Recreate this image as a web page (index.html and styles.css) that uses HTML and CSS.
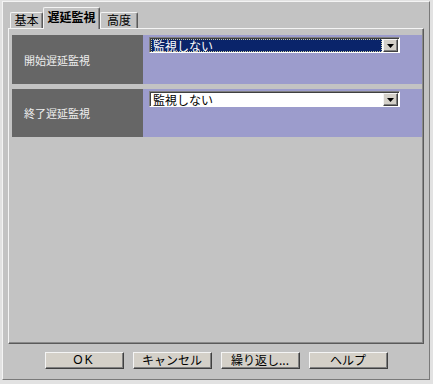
FILE: index.html
```html
<!DOCTYPE html>
<html lang="ja">
<head>
<meta charset="utf-8">
<link rel="stylesheet" href="styles.css">
</head>
<body>
<div class="dialog">
  <div class="tabs">
    <div class="tab tab-basic">基本</div>
    <div class="tab tab-active">遅延監視</div>
    <div class="tab tab-adv">高度</div>
  </div>
  <div class="panel">
    <div class="row">
      <div class="label">開始遅延監視</div>
      <div class="value">
        <div class="select focused">
          <span class="sel-text">監視しない</span>
          <span class="drop"><svg width="7" height="4" viewBox="0 0 7 4"><polygon points="0,0 7,0 3.5,4" fill="#000"/></svg></span>
        </div>
      </div>
    </div>
    <div class="row">
      <div class="label">終了遅延監視</div>
      <div class="value">
        <div class="select">
          <span class="sel-text">監視しない</span>
          <span class="drop"><svg width="7" height="4" viewBox="0 0 7 4"><polygon points="0,0 7,0 3.5,4" fill="#000"/></svg></span>
        </div>
      </div>
    </div>
  </div>
  <div class="buttons">
    <div class="btn btn-ok">OK</div>
    <div class="btn">キャンセル</div>
    <div class="btn">繰り返し...</div>
    <div class="btn">ヘルプ</div>
  </div>
</div>
</body>
</html>
```
FILE: styles.css
```css
body {
  margin: 0;
  background: #e2e2e2;
  font-family: "Noto Sans CJK JP", "Liberation Sans", sans-serif;
}
.dialog {
  box-sizing: border-box;
  width: 428px;
  height: 379px;
  margin: 1px 0 0 2px;
  background: #c3c3c3;
  border: 1px solid;
  border-color: #f4f4f4 #7a7a7a #7a7a7a #f4f4f4;
  padding: 5px 5px 0 5px;
}
.tabs {
  display: flex;
  align-items: flex-end;
  height: 21px;
  padding-left: 2px;
}
.tab {
  box-sizing: border-box;
  height: 16px;
  border-top: 1px solid #f4f4f4;
  border-left: 1px solid #f4f4f4;
  border-right: 1px solid #5a5a5a;
  border-radius: 2px 2px 0 0;
  box-shadow: inset -1px 0 #8a8a8a;
  font-size: 12px;
  line-height: 14px;
  text-align: center;
  color: #000;
  background: #c3c3c3;
}
.tab-basic { width: 33px; }
.tab-active {
  width: 57px;
  height: 22px;
  margin-bottom: -1px;
  font-weight: bold;
  line-height: 18px;
  position: relative;
  z-index: 1;
}
.tab-adv { width: 38px; }
.panel {
  box-sizing: border-box;
  height: 316px;
  border-top: 1px solid #f4f4f4;
  border-left: 1px solid #f4f4f4;
  border-right: 1px solid #5a5a5a;
  border-bottom: 1px solid #5a5a5a;
  box-shadow: inset -1px -1px #8a8a8a;
  padding: 6px 1px 0 3px;
  display: flex;
  flex-direction: column;
  gap: 5px;
}
.row {
  display: flex;
  height: 49px;
}
.row + .row { height: 48px; }
.label {
  width: 131px;
  background: #666666;
  color: #eeeeee;
  font-size: 11px;
  padding-left: 12px;
  box-sizing: border-box;
  display: flex;
  align-items: center;
}
.value {
  flex: 1;
  background: #9c9ccc;
  padding: 2px 0 0 6px;
}
.select {
  box-sizing: border-box;
  width: 251px;
  height: 16px;
  background: #fff;
  border: 1px solid;
  border-color: #808080 #fff #fff #808080;
  box-shadow: inset 1px 1px #404040;
  display: flex;
  align-items: center;
  padding: 1px 1px 0 1px;
}
.sel-text {
  flex: 1;
  height: 13px;
  font-size: 12px;
  line-height: 13px;
  color: #000;
  padding-left: 2px;
  white-space: nowrap;
}
.focused .sel-text {
  background: #0a246a;
  color: #fff;
  outline: 1px dotted #c8c8a0;
  outline-offset: -1px;
}
.drop {
  box-sizing: border-box;
  width: 15px;
  height: 13px;
  margin-left: 1px;
  background: #d4d0c8;
  border: 1px solid;
  border-color: #f4f4f4 #404040 #404040 #f4f4f4;
  box-shadow: inset -1px -1px #808080;
  display: flex;
  align-items: center;
  justify-content: center;
}
.drop svg { display: block; }
.buttons {
  display: flex;
  justify-content: center;
  gap: 9px;
  margin-top: 8px;
}
.btn {
  box-sizing: border-box;
  width: 79px;
  height: 17px;
  background: #d4d0c8;
  border: 1px solid;
  border-color: #f4f4f4 #404040 #404040 #f4f4f4;
  box-shadow: inset -1px -1px #808080;
  font-size: 12px;
  line-height: 14px;
  text-align: center;
  color: #000;
}
.btn-ok {
  letter-spacing: 2px;
  font-family: "Liberation Sans", sans-serif;
}
```
